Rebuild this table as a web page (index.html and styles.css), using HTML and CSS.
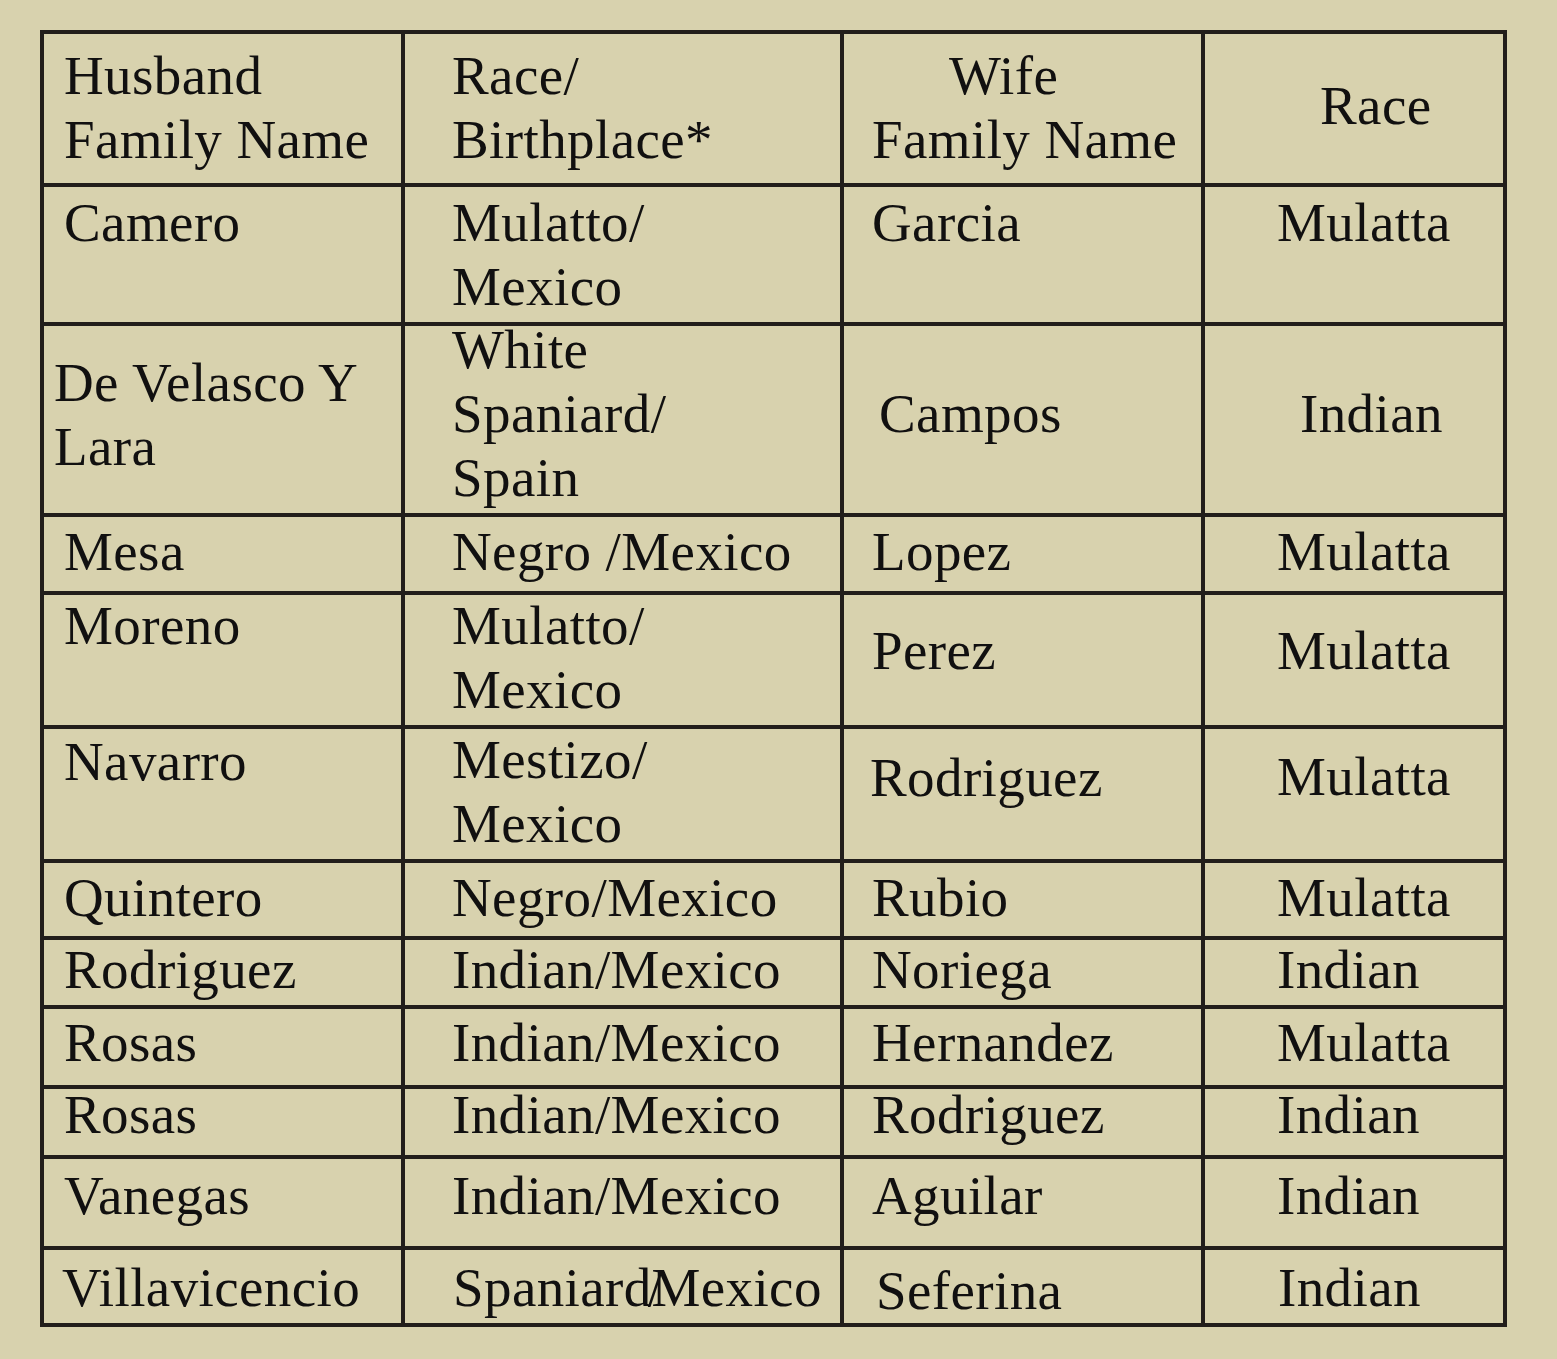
FILE: index.html
```html
<!DOCTYPE html>
<html lang="en">
<head>
<meta charset="utf-8">
<title>Marriages</title>
<link rel="stylesheet" href="styles.css">
</head>
<body>
<div class="table">
  <div class="row r-head">
    <div class="cell c1"><div class="tx">Husband<br>Family Name</div></div>
    <div class="cell c2"><div class="tx">Race/<br>Birthplace*</div></div>
    <div class="cell c3"><div class="tx"><span class="ln wife">Wife</span><span class="ln">Family Name</span></div></div>
    <div class="cell c4 race-h"><div class="tx">Race</div></div>
  </div>
  <div class="row r1">
    <div class="cell c1"><div class="tx">Camero</div></div>
    <div class="cell c2"><div class="tx">Mulatto/<br>Mexico</div></div>
    <div class="cell c3"><div class="tx">Garcia</div></div>
    <div class="cell c4"><div class="tx">Mulatta</div></div>
  </div>
  <div class="row r2">
    <div class="cell c1 devel"><div class="tx">De Velasco Y<br>Lara</div></div>
    <div class="cell c2"><div class="tx">White<br>Spaniard/<br>Spain</div></div>
    <div class="cell c3 campos"><div class="tx">Campos</div></div>
    <div class="cell c4 indian-mid"><div class="tx">Indian</div></div>
  </div>
  <div class="row r3">
    <div class="cell c1"><div class="tx">Mesa</div></div>
    <div class="cell c2"><div class="tx">Negro /Mexico</div></div>
    <div class="cell c3"><div class="tx">Lopez</div></div>
    <div class="cell c4"><div class="tx">Mulatta</div></div>
  </div>
  <div class="row r4">
    <div class="cell c1"><div class="tx">Moreno</div></div>
    <div class="cell c2"><div class="tx">Mulatto/<br>Mexico</div></div>
    <div class="cell c3"><div class="tx">Perez</div></div>
    <div class="cell c4"><div class="tx">Mulatta</div></div>
  </div>
  <div class="row r5">
    <div class="cell c1"><div class="tx">Navarro</div></div>
    <div class="cell c2"><div class="tx">Mestizo/<br>Mexico</div></div>
    <div class="cell c3 rod"><div class="tx">Rodriguez</div></div>
    <div class="cell c4"><div class="tx">Mulatta</div></div>
  </div>
  <div class="row r6">
    <div class="cell c1"><div class="tx">Quintero</div></div>
    <div class="cell c2"><div class="tx">Negro/Mexico</div></div>
    <div class="cell c3"><div class="tx">Rubio</div></div>
    <div class="cell c4"><div class="tx">Mulatta</div></div>
  </div>
  <div class="row r7">
    <div class="cell c1"><div class="tx">Rodriguez</div></div>
    <div class="cell c2"><div class="tx">Indian/Mexico</div></div>
    <div class="cell c3"><div class="tx">Noriega</div></div>
    <div class="cell c4"><div class="tx">Indian</div></div>
  </div>
  <div class="row r8">
    <div class="cell c1"><div class="tx">Rosas</div></div>
    <div class="cell c2"><div class="tx">Indian/Mexico</div></div>
    <div class="cell c3"><div class="tx">Hernandez</div></div>
    <div class="cell c4"><div class="tx">Mulatta</div></div>
  </div>
  <div class="row r9">
    <div class="cell c1"><div class="tx">Rosas</div></div>
    <div class="cell c2"><div class="tx">Indian/Mexico</div></div>
    <div class="cell c3"><div class="tx">Rodriguez</div></div>
    <div class="cell c4"><div class="tx">Indian</div></div>
  </div>
  <div class="row r10">
    <div class="cell c1"><div class="tx">Vanegas</div></div>
    <div class="cell c2"><div class="tx">Indian/Mexico</div></div>
    <div class="cell c3"><div class="tx">Aguilar</div></div>
    <div class="cell c4"><div class="tx">Indian</div></div>
  </div>
  <div class="row r11">
    <div class="cell c1 villa"><div class="tx">Villavicencio</div></div>
    <div class="cell c2 span-mx"><div class="tx">Spaniard<span class="ovl">/</span>Mexico</div></div>
    <div class="cell c3 sef"><div class="tx">Seferina</div></div>
    <div class="cell c4 ind-last"><div class="tx">Indian</div></div>
  </div>
</div>
</body>
</html>
```
FILE: styles.css
```css
html, body {
  margin: 0;
  padding: 0;
  background: #d8d2ae;
}

body {
  font-family: "Liberation Serif", "Times New Roman", serif;
  color: #111010;
}

.table {
  display: grid;
  grid-template-columns: 357px 435px 357px 298px;
  grid-template-rows: 149px 135px 187px 74px 130px 130px 73px 65px 76px 66px 87px 73px;
  gap: 4px;
  padding: 4px;
  width: max-content;
  margin: 30px 0 0 40px;
  background: #221e1b;
}

.row {
  display: contents;
}

.cell {
  background: #d8d2ae;
  font-size: 55px;
  line-height: 64px;
  letter-spacing: 0.4px;
  white-space: nowrap;
  min-width: 0;
}

.ln {
  display: block;
}

/* columns: horizontal placement */
.c1 { padding-left: 20px; }
.c2 { padding-left: 47px; }
.c3 { padding-left: 28px; }
.c4 { padding-left: 72px; }

.wife { padding-left: 77px; }
.race-h { padding-left: 115px; }
.devel { padding-left: 10px; }
.campos { padding-left: 35px; }
.indian-mid { padding-left: 95px; }
.rod { padding-left: 26px; }
.villa { padding-left: 18px; }
.span-mx { padding-left: 48px; }
.sef { padding-left: 32px; }
.ind-last { padding-left: 73px; }

/* rows: vertical placement */
.r-head .tx { margin-top: 10px; }
.r-head .race-h .tx { margin-top: 40px; }

.r1 .tx { margin-top: 4px; }

.r2 .c1 .tx { margin-top: 25px; }
.r2 .c2 .tx { margin-top: -8px; }
.r2 .c3 .tx,
.r2 .c4 .tx { margin-top: 56px; }

.r3 .tx { margin-top: 3px; }

.r4 .c1 .tx,
.r4 .c2 .tx { margin-top: -1px; }
.r4 .c3 .tx,
.r4 .c4 .tx { margin-top: 24px; }

.r5 .c1 .tx { margin-top: 1px; }
.r5 .c2 .tx { margin-top: -1px; }
.r5 .c3 .tx { margin-top: 17px; }
.r5 .c4 .tx { margin-top: 16px; }

.r6 .tx { margin-top: 3px; }
.r7 .tx { margin-top: -2px; }
.r8 .tx { margin-top: 2px; }
.r9 .tx { margin-top: -6px; }
.r10 .tx { margin-top: 5px; }
.r11 .tx { margin-top: 6px; }
.r11 .sef .tx { margin-top: 9px; }

.ovl {
  margin-left: -4px;
  margin-right: -12px;
}
```
